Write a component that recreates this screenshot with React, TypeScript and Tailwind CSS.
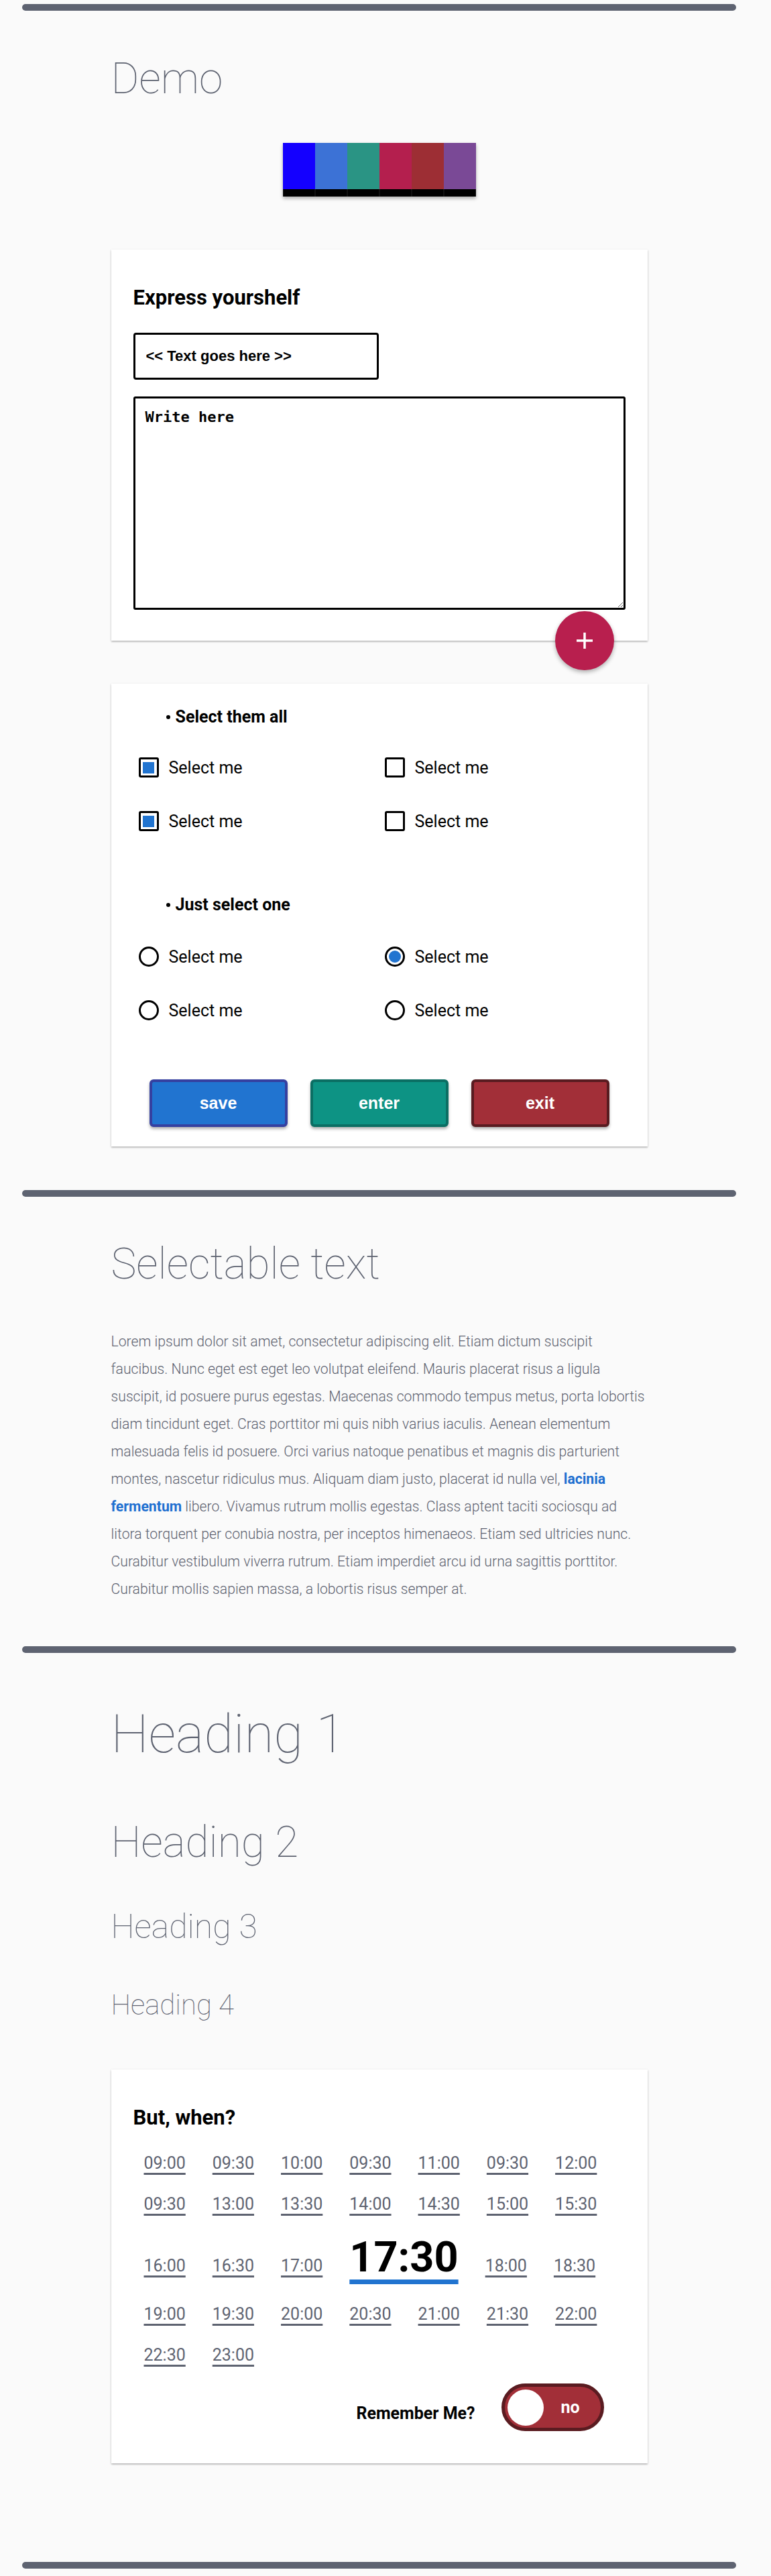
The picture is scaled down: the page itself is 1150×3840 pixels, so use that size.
import React from 'react';

const roboto = "font-['Roboto','Noto_Sans',sans-serif]";
const arial = "font-['Liberation_Sans',Arial,sans-serif]";
const mono = "font-['DejaVu_Sans_Mono','Liberation_Mono',monospace]";

const swatches = ['bg-[#1400ff]', 'bg-[#3c72d6]', 'bg-[#2a9484]', 'bg-[#b41f4e]', 'bg-[#9d2e34]', 'bg-[#7a4996]'];

const times = [
  '09:00', '09:30', '10:00', '09:30', '11:00', '09:30', '12:00',
  '09:30', '13:00', '13:30', '14:00', '14:30', '15:00', '15:30',
  '16:00', '16:30', '17:00', '17:30', '18:00', '18:30',
  '19:00', '19:30', '20:00', '20:30', '21:00', '21:30', '22:00',
  '22:30', '23:00',
];

const Bar = () => (
  <div className="mx-[33px] h-[10px] rounded-full bg-[#5e6371]" />
);

const Card: React.FC<{ className?: string; children: React.ReactNode }> = ({ className = '', children }) => (
  <div className={`relative bg-white shadow-[0_1px_3px_rgba(0,0,0,0.18),0_2px_2px_rgba(0,0,0,0.14)] ${className}`}>
    {children}
  </div>
);

const Bullet: React.FC<{ className?: string; children: React.ReactNode }> = ({ className = '', children }) => (
  <div className={`flex items-center pl-[49px] text-[25px] font-bold leading-none text-black ${className}`}>
    <span className="mr-[8px] h-[6px] w-[6px] rounded-full bg-black" />
    <span>{children}</span>
  </div>
);

const Checkbox: React.FC<{ on?: boolean }> = ({ on }) => (
  <span className="flex h-[30px] w-[30px] shrink-0 items-center justify-center rounded-[3px] border-[3px] border-black bg-white">
    {on && <span className="h-[17px] w-[17px] bg-[#2174d0]" />}
  </span>
);

const Radio: React.FC<{ on?: boolean }> = ({ on }) => (
  <span className="flex h-[30px] w-[30px] shrink-0 items-center justify-center rounded-full border-[3px] border-black bg-white">
    {on && <span className="h-[18px] w-[18px] rounded-full bg-[#2174d0]" />}
  </span>
);

const Option: React.FC<{ control: React.ReactNode }> = ({ control }) => (
  <label className="flex h-[30px] items-center gap-[15px] pl-[8px]">
    {control}
    <span className="text-[25px] leading-none text-black">Select me</span>
  </label>
);

const App: React.FC = () => {
  return (
    <div className={`w-[1150px] bg-[#fafafa] pt-[6px] pb-[11px] ${roboto}`}>
      <div className="w-[1131px]">
        <Bar />

        <section className="mx-auto w-[800px]">
          <h1 className="mt-[70px] text-[64px] font-thin leading-none text-[#5e6371]">Demo</h1>

          <div className="mt-[63px] flex justify-center">
            <div className="flex shadow-[0_3px_5px_rgba(0,0,0,0.3)]">
              {swatches.map((c) => (
                <div key={c} className="w-[48px]">
                  <div className={`h-[69px] ${c}`} />
                  <div className="h-[11px] border-x border-[#111] bg-black" />
                </div>
              ))}
            </div>
          </div>

          <Card className="mt-[79px] px-[33px] pt-[56px] pb-[46px]">
            <h2 className="text-[31px] font-bold leading-none text-black">Express yourshelf</h2>
            <input
              type="text"
              placeholder="<< Text goes here >>"
              className={`mt-[37px] block h-[70px] w-[366px] rounded-[4px] border-[3px] border-black px-[16px] text-[22px] font-bold text-black placeholder:text-black ${arial}`}
            />
            <textarea
              placeholder="Write here"
              className={`mt-[25px] block h-[318px] w-full rounded-[3px] border-[3px] border-black px-[15px] pt-[11px] pb-[15px] text-[22px] font-bold leading-normal text-black placeholder:text-black ${mono}`}
            />
            <button className="absolute right-[50px] bottom-[-44px] flex h-[88px] w-[88px] items-center justify-center rounded-full bg-[#b81f4e] shadow-[0_3px_6px_rgba(0,0,0,0.3)]">
              <svg width="24" height="24" viewBox="0 0 24 24">
                <path d="M12 0v24M0 12h24" stroke="white" strokeWidth="3.5" fill="none" />
              </svg>
            </button>
          </Card>

          <Card className="mt-[64px] px-[33px] pt-[37px] pb-[29px]">
            <Bullet>Select them all</Bullet>
            <div className="mt-[48px] grid grid-cols-2 gap-y-[50px]">
              <Option control={<Checkbox on />} />
              <Option control={<Checkbox />} />
              <Option control={<Checkbox on />} />
              <Option control={<Checkbox />} />
            </div>

            <Bullet className="mt-[97px]">Just select one</Bullet>
            <div className="mt-[50px] grid grid-cols-2 gap-y-[50px]">
              <Option control={<Radio />} />
              <Option control={<Radio on />} />
              <Option control={<Radio />} />
              <Option control={<Radio />} />
            </div>

            <div className={`mt-[88px] flex justify-center gap-[34px] text-[25px] font-bold text-white ${arial}`}>
              <button className="h-[71px] w-[206px] rounded-[6px] border-[4px] border-[#3540a0] bg-[#2174d0] shadow-[0_3px_4px_rgba(0,0,0,0.3)]">save</button>
              <button className="h-[71px] w-[206px] rounded-[6px] border-[4px] border-[#0b6e63] bg-[#0d9384] shadow-[0_3px_4px_rgba(0,0,0,0.3)]">enter</button>
              <button className="h-[71px] w-[206px] rounded-[6px] border-[4px] border-[#581b20] bg-[#a22f38] shadow-[0_3px_4px_rgba(0,0,0,0.3)]">exit</button>
            </div>
          </Card>
        </section>

        <div className="mt-[65px]">
          <Bar />
        </div>

        <section className="mx-auto w-[800px]">
          <h1 className="mt-[69px] text-[64px] font-thin leading-none text-[#5e6371]">Selectable text</h1>
          <p className="mt-[62px] text-[21.2px] font-light leading-[41px] text-[#5e6371]">
            Lorem ipsum dolor sit amet, consectetur adipiscing elit. Etiam dictum suscipit faucibus. Nunc eget est eget
            leo volutpat eleifend. Mauris placerat risus a ligula suscipit, id posuere purus egestas. Maecenas commodo
            tempus metus, porta lobortis diam tincidunt eget. Cras porttitor mi quis nibh varius iaculis. Aenean
            elementum malesuada felis id posuere. Orci varius natoque penatibus et magnis dis parturient montes, nascetur
            ridiculus mus. Aliquam diam justo, placerat id nulla vel,{' '}
            <a href="#" className="font-bold text-[#1e6fd0]">lacinia fermentum</a> libero. Vivamus rutrum mollis
            egestas. Class aptent taciti sociosqu ad litora torquent per conubia nostra, per inceptos himenaeos. Etiam
            sed ultricies nunc. Curabitur vestibulum viverra rutrum. Etiam imperdiet arcu id urna sagittis porttitor.
            Curabitur mollis sapien massa, a lobortis risus semper at.
          </p>
        </section>

        <div className="mt-[65px]">
          <Bar />
        </div>

        <section className="mx-auto w-[800px]">
          <h1 className="mt-[81px] text-[80px] font-thin leading-none text-[#5e6371]">Heading 1</h1>
          <h2 className="mt-[90px] text-[64px] font-thin leading-none text-[#5e6371]">Heading 2</h2>
          <h3 className="mt-[68px] text-[50px] font-thin leading-none text-[#5e6371]">Heading 3</h3>
          <h4 className="mt-[71px] text-[42px] font-thin leading-none text-[#5e6371]">Heading 4</h4>

          <Card className="mt-[75px] px-[33px] pt-[56px] pb-[48px]">
            <h2 className="text-[31px] font-bold leading-none text-black">But, when?</h2>
            <div className="mt-[22px] flex flex-wrap items-baseline gap-x-[40px] pl-[16px]">
              {times.map((t, i) =>
                t === '17:30' ? (
                  <a
                    key={i}
                    href="#"
                    className="mb-[5px] text-[63px] font-bold leading-[98px] text-black underline decoration-[#2174d0] decoration-[7px] underline-offset-[12px]"
                  >
                    {t}
                  </a>
                ) : (
                  <a
                    key={i}
                    href="#"
                    className="text-[25px] leading-[61px] text-[#5e6371] underline decoration-[#5e6371] decoration-[3px] underline-offset-[6px]"
                  >
                    {t}
                  </a>
                )
              )}
            </div>

            <div className="mt-[12px] flex items-center justify-end gap-[39px] pr-[32px]">
              <span className="mt-[17px] text-[25px] font-bold leading-none text-black">Remember Me?</span>
              <button className="flex h-[71px] w-[153px] items-center justify-between rounded-full border-[5px] border-[#5a1c21] bg-[#a22f38] pl-[4px] pr-[31px]">
                <span className="h-[54px] w-[54px] rounded-full bg-white" />
                <span className="text-[25px] font-bold leading-none text-white">no</span>
              </button>
            </div>
          </Card>
        </section>

        <div className="mt-[147px]">
          <Bar />
        </div>
      </div>
    </div>
  );
};

export default App;
